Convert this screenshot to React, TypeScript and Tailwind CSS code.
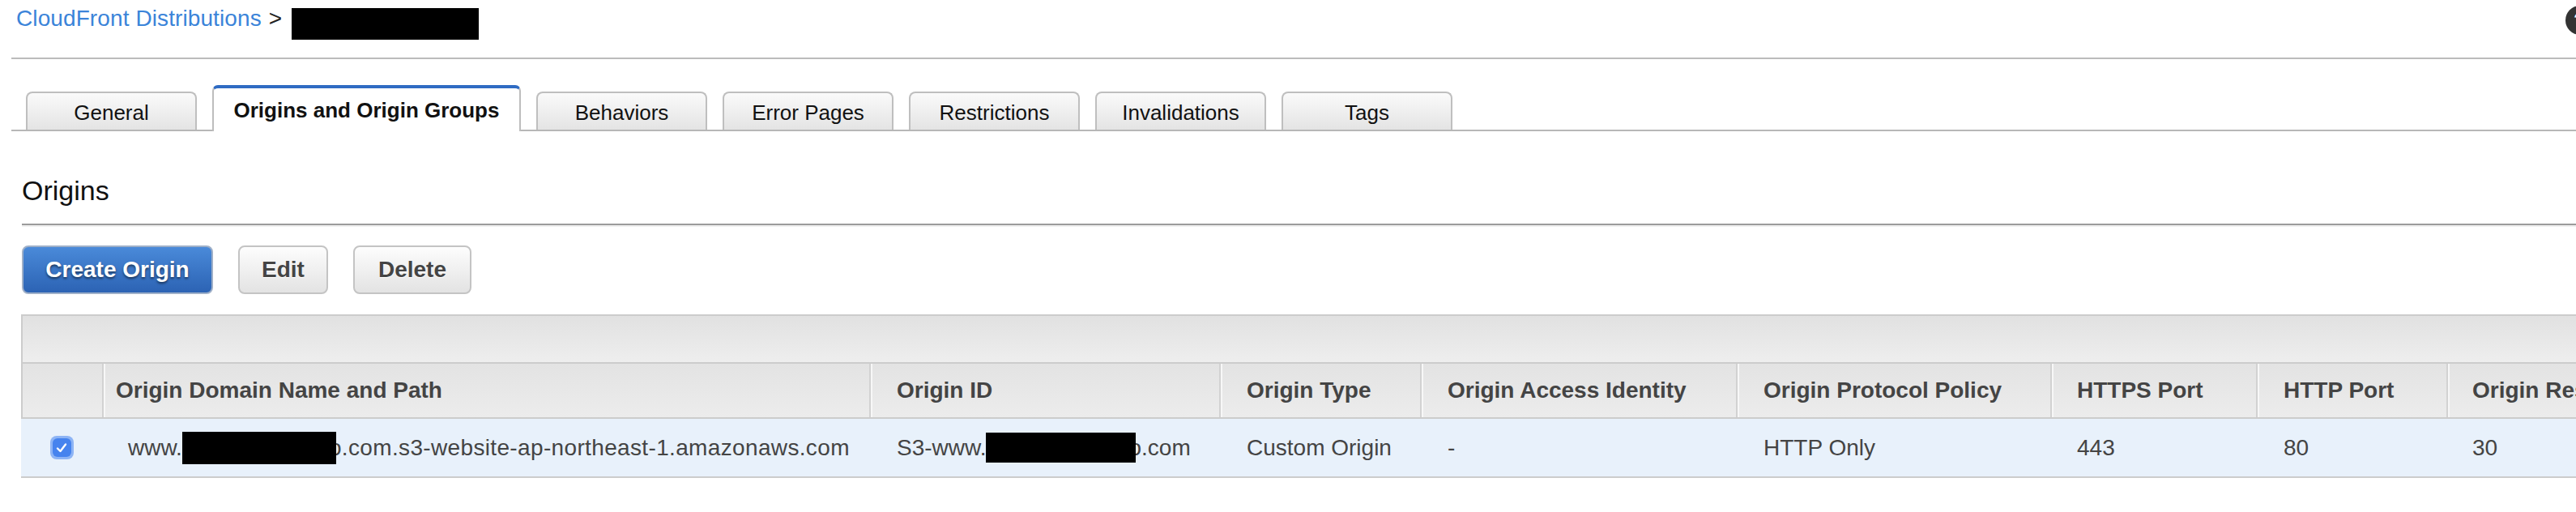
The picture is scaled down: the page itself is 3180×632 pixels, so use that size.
import React from "react";

const tabs = [
  { label: "General" },
  { label: "Origins and Origin Groups", active: true },
  { label: "Behaviors" },
  { label: "Error Pages" },
  { label: "Restrictions" },
  { label: "Invalidations" },
  { label: "Tags" },
];

const headers = [
  { label: "Origin Domain Name and Path", pl: "pl-[15px]" },
  { label: "Origin ID", pl: "pl-[32px]" },
  { label: "Origin Type", pl: "pl-[32px]" },
  { label: "Origin Access Identity", pl: "pl-[32px]" },
  { label: "Origin Protocol Policy", pl: "pl-[32px]" },
  { label: "HTTPS Port", pl: "pl-[31px]" },
  { label: "HTTP Port", pl: "pl-[32px]" },
  { label: "Origin Response Timeout", pl: "pl-[30px]" },
];

function Redact({ w, h }: { w: number; h: number }) {
  return (
    <span
      className="relative z-10 inline-block bg-black align-middle mr-[-9px]"
      style={{ width: w, height: h }}
    />
  );
}

export default function App() {
  return (
    <div className="relative w-[3180px] h-[632px] overflow-hidden bg-white font-['Liberation_Sans',Arial,Helvetica,sans-serif] text-[#222]">
      {/* help icon (partially off-screen) */}
      <div className="absolute left-[3167px] top-[7px] w-[36px] h-[36px] rounded-full bg-[#333333] flex items-center justify-center text-white font-bold text-[26px] leading-none">
        ?
      </div>

      <div className="pl-[14px]">
        {/* breadcrumb */}
        <div className="h-[71px] pl-[6px] pt-[7px] flex items-start">
          <span className="text-[28px] leading-[32px] text-[#3b84d9] tracking-[0.1px]">CloudFront Distributions</span>
          <span className="text-[28px] leading-[32px] ml-[9px] text-[#222]">&gt;</span>
          <span className="ml-[12px] mt-[3px] w-[231px] h-[39px] bg-black" />
        </div>
        <div className="h-[2px] bg-[#bcbcbc]" />

        {/* tabs */}
        <div className="mt-[32px] flex items-end gap-[19px] pl-[18px] border-b-2 border-[#b7b7b7]">
          {tabs.map((t) =>
            t.active ? (
              <div
                key={t.label}
                className="w-[381px] h-[57px] mb-[-2px] bg-white border-t-[4px] border-t-[#2f6bc3] border-x-2 border-x-[#bdbdbd] rounded-t-[7px] flex items-center justify-center text-[26px] font-bold text-[#111] pt-[2px]"
              >
                {t.label}
              </div>
            ) : (
              <div
                key={t.label}
                className="w-[211px] h-[47px] border-t-2 border-x-2 border-[#bfbfbf] rounded-t-[8px] bg-gradient-to-b from-[#fafafa] to-[#e4e4e4] flex items-center justify-center text-[26px] text-[#111] pt-[3px]"
              >
                {t.label}
              </div>
            )
          )}
        </div>
      </div>

      {/* Origins section */}
      <div className="pl-[26px]">
        <div className="mt-[53px] ml-[1px] text-[34px] leading-[40px] text-[#111]">Origins</div>
        <div className="mt-[21px] ml-[1px] h-[2px] bg-[#9b9b9b]" />
        <div className="ml-[1px] h-[2px] bg-[#efefef]" />

        <div className="mt-[23px] ml-[1px] flex gap-[31px]">
          <button className="w-[236px] h-[60px] rounded-[8px] border-2 border-[#9fb0c8] bg-gradient-to-b from-[#4a8ad9] to-[#2c63b4] text-white text-[28px] font-bold [text-shadow:0_2px_3px_rgba(0,0,0,0.55)]">
            Create Origin
          </button>
          <button className="w-[111px] h-[60px] rounded-[8px] border-2 border-[#c4c4c4] bg-gradient-to-b from-[#fdfdfd] to-[#e3e3e3] text-[#444] text-[28px] font-bold [text-shadow:0_1px_0_#ffffff]">
            Edit
          </button>
          <button className="w-[146px] h-[60px] rounded-[8px] border-2 border-[#c4c4c4] bg-gradient-to-b from-[#fdfdfd] to-[#e3e3e3] text-[#444] text-[28px] font-bold [text-shadow:0_1px_0_#ffffff]">
            Delete
          </button>
        </div>

        {/* table */}
        <div className="mt-[25px] w-[3400px]">
          <div className="h-[59px] border-t-2 border-l-2 border-[#cccccc] bg-gradient-to-b from-[#e1e1e1] to-[#eeeeee]" />
          <div className="h-[70px] border-y-2 border-l-2 border-[#cccccc] bg-gradient-to-b from-[#e3e3e3] to-[#ececec] grid grid-cols-[98px_947px_432px_248px_390px_388px_254px_235px_400px]">
            <div />
            {headers.map((h) => (
              <div
                key={h.label}
                className={`border-l-2 border-[#d2d2d2] shadow-[inset_2px_0_0_#f7f7f7] flex items-center ${h.pl} text-[28px] font-bold text-[#444] whitespace-nowrap`}
              >
                {h.label}
              </div>
            ))}
          </div>
          <div className="h-[73px] border-b-2 border-[#cccccc] bg-[#e8f1fb] grid grid-cols-[100px_947px_432px_248px_390px_388px_254px_235px_400px] text-[28px] text-[#444] whitespace-nowrap">
            <div className="flex items-center justify-center">
              <div className="w-[29px] h-[29px] rounded-[8px] bg-[#8db4f5] flex items-center justify-center">
                <div className="w-[23px] h-[23px] rounded-[6px] bg-[#4683ee] flex items-center justify-center">
                  <svg width="16" height="16" viewBox="0 0 16 16">
                    <path d="M3 8.5 L6.5 12 L13 3.5" fill="none" stroke="#ffffff" strokeWidth="2.4" strokeLinecap="round" strokeLinejoin="round" />
                  </svg>
                </div>
              </div>
            </div>
            <div className="flex items-center pl-[32px]">
              <span>www.</span>
              <Redact w={190} h={40} />
              <span className="tracking-[0.35px]">o.com.s3-website-ap-northeast-1.amazonaws.com</span>
            </div>
            <div className="flex items-center pl-[34px]">
              <span>S3-www.</span>
              <Redact w={185} h={37} />
              <span>o.com</span>
            </div>
            <div className="flex items-center pl-[34px]">Custom Origin</div>
            <div className="flex items-center pl-[34px]">-</div>
            <div className="flex items-center pl-[34px]">HTTP Only</div>
            <div className="flex items-center pl-[33px]">443</div>
            <div className="flex items-center pl-[34px]">80</div>
            <div className="flex items-center pl-[32px]">30</div>
          </div>
        </div>
      </div>
    </div>
  );
}
